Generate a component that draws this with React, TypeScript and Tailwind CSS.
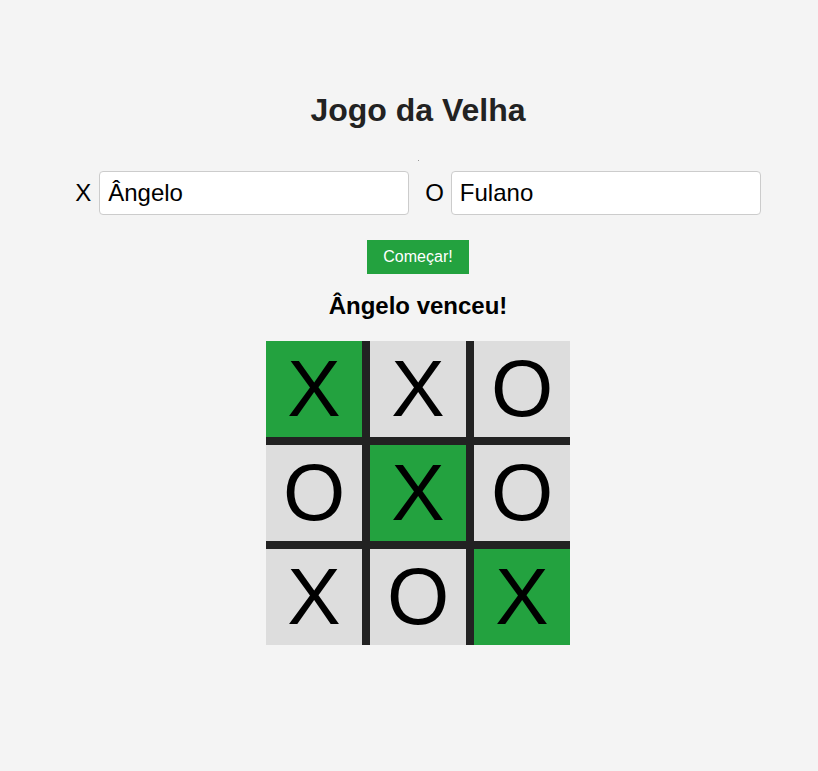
import React from "react";

const cells = [
    { mark: "X", win: true },
    { mark: "X", win: false },
    { mark: "O", win: false },
    { mark: "O", win: false },
    { mark: "X", win: true },
    { mark: "O", win: false },
    { mark: "X", win: false },
    { mark: "O", win: false },
    { mark: "X", win: true },
];

const App = () => {
    return (
        <div className="min-h-screen bg-[#f4f4f4] pl-[18px] font-['Liberation_Sans',Arial,sans-serif] text-black">
            <div className="flex flex-col items-center">
                <h1 className="mt-[92px] text-[32px] font-bold leading-[37px] text-[#222]">Jogo da Velha</h1>
                <div className="mt-[31px] h-[1px] w-[1px] bg-[#999]" />
                <div className="mt-[10px] flex items-center">
                    <label className="mr-2 text-[24px] leading-[28px]">X</label>
                    <input
                        className="h-[44px] w-[310px] rounded border border-[#ccc] bg-white px-2 text-[24px] outline-none"
                        defaultValue="Ângelo"
                    />
                    <label className="ml-4 mr-[7px] text-[24px] leading-[28px]">O</label>
                    <input
                        className="h-[44px] w-[310px] rounded border border-[#ccc] bg-white px-2 text-[24px] outline-none"
                        defaultValue="Fulano"
                    />
                </div>
                <button className="mt-[25px] h-[34px] border border-[#23a23f] bg-[#23a23f] px-[15px] text-base leading-[18px] text-white">
                    Começar!
                </button>
                <h2 className="mt-[18px] text-[24px] font-bold leading-[28px]">Ângelo venceu!</h2>
                <div className="mt-[21px] grid w-[304px] grid-cols-3 gap-2 bg-[#222]">
                    {cells.map(({ mark, win }, index) => (
                        <div
                            key={index}
                            className={`flex h-[96px] w-[96px] items-center justify-center text-[80px] leading-[normal] ${win ? "bg-[#23a23f]" : "bg-[#ddd]"}`}
                        >
                            {mark}
                        </div>
                    ))}
                </div>
            </div>
        </div>
    );
};

export default App;
